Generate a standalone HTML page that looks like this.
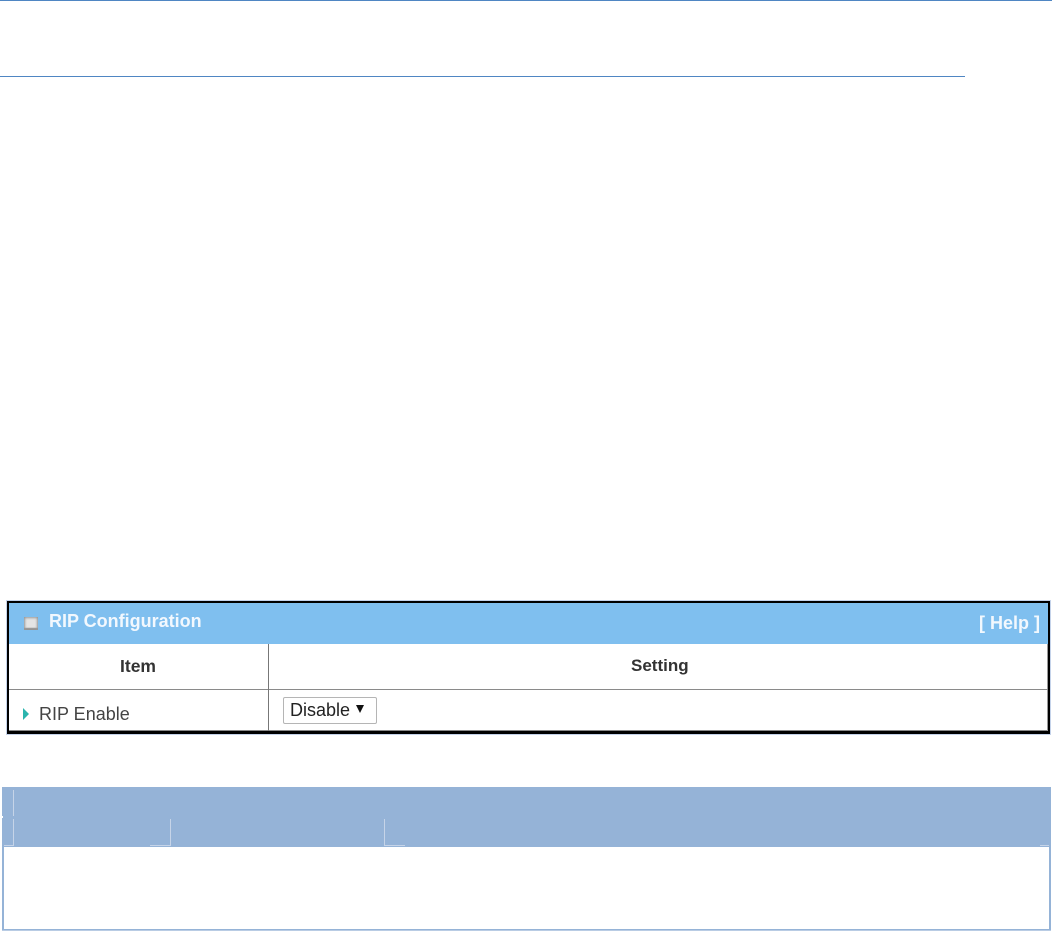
<!DOCTYPE html>
<html><head><meta charset="utf-8"><style>
html,body{margin:0;padding:0;background:#fff;width:1056px;height:931px;overflow:hidden}
body{position:relative;font-family:"Liberation Sans",sans-serif}
.a{position:absolute}
.t{position:absolute;white-space:nowrap;filter:blur(.35px)}
</style></head><body>
<div class="a" style="left:0;top:0;width:1052px;height:1px;background:#4f86c3"></div>
<div class="a" style="left:0;top:76px;width:965px;height:1px;background:#4f86c3"></div>

<div class="a" style="left:6px;top:600px;width:1045px;height:135px;background:#c5d3ea"></div>
<div class="a" style="left:7px;top:601px;width:1043px;height:133px;background:#000"></div>
<div class="a" style="left:9px;top:603px;width:1039px;height:128px;background:#fff"></div>
<div class="a" style="left:9px;top:603px;width:1039px;height:41px;background:#7fbfef"></div>
<div class="a" style="left:9px;top:730px;width:1039px;height:1px;background:#888"></div>
<div class="a" style="left:1047px;top:644px;width:1px;height:87px;background:#999"></div>
<div class="a" style="left:9px;top:689px;width:1039px;height:1px;background:#8a8a8a"></div>
<div class="a" style="left:268px;top:644px;width:1px;height:87px;background:#777"></div>
<div class="a" style="left:24px;top:617px;width:14px;height:13px;background:#e4e4e4;box-shadow:inset 0 0 2px 1px #999,inset 0 -2px 1px #8d8d8d;filter:blur(.3px)"></div>
<div class="t" style="left:49px;top:611px;font-size:18px;line-height:20px;font-weight:bold;color:#f2f8fe">RIP Configuration</div>
<div class="t" style="left:979px;top:613px;font-size:18px;line-height:20px;font-weight:bold;color:#f2f8fe">[ Help ]</div>
<div class="t" style="left:120px;top:656px;font-size:17.500px;line-height:20px;font-weight:bold;color:#333">Item</div>
<div class="t" style="left:631px;top:656px;font-size:17px;line-height:20px;font-weight:bold;color:#333">Setting</div>
<svg class="a" style="left:23px;top:708px" width="7" height="12"><path d="M0 0L6 6L0 12Z" fill="#2bb5ae"/></svg>
<div class="t" style="left:39px;top:704px;font-size:18px;line-height:20px;color:#444">RIP Enable</div>
<div class="a" style="left:283px;top:697px;width:92px;height:25px;border:1px solid #b5b5b5;border-radius:2px;background:#fff"></div>
<div class="t" style="left:290px;top:700px;font-size:18px;line-height:20px;color:#222">Disable</div>
<svg class="a" style="left:356px;top:705px" width="8" height="8"><path d="M0 0H8L4 8Z" fill="#111"/></svg>

<div class="a" style="left:2px;top:787px;width:1049px;height:144px;background:#95b3d7"></div>
<div class="a" style="left:4px;top:847px;width:1045px;height:82px;background:#fff"></div>
<div class="a" style="left:2px;top:930px;width:1049px;height:1px;background:#b9cce4"></div>
<div class="a" style="left:2px;top:816px;width:1px;height:2px;background:#fff"></div>
<div class="a" style="left:13px;top:790px;width:1px;height:26px;background:#c6d4e8"></div>
<div class="a" style="left:13px;top:819px;width:1px;height:27px;background:#c6d4e8"></div>
<div class="a" style="left:4px;top:845px;width:10px;height:1px;background:#c6d4e8"></div>
<div class="a" style="left:170px;top:819px;width:1px;height:27px;background:#c6d4e8"></div>
<div class="a" style="left:150px;top:845px;width:21px;height:1px;background:#c6d4e8"></div>
<div class="a" style="left:384px;top:819px;width:1px;height:27px;background:#c6d4e8"></div>
<div class="a" style="left:384px;top:845px;width:21px;height:1px;background:#c6d4e8"></div>
<div class="a" style="left:1040px;top:845px;width:9px;height:1px;background:#c6d4e8"></div>
</body></html>
